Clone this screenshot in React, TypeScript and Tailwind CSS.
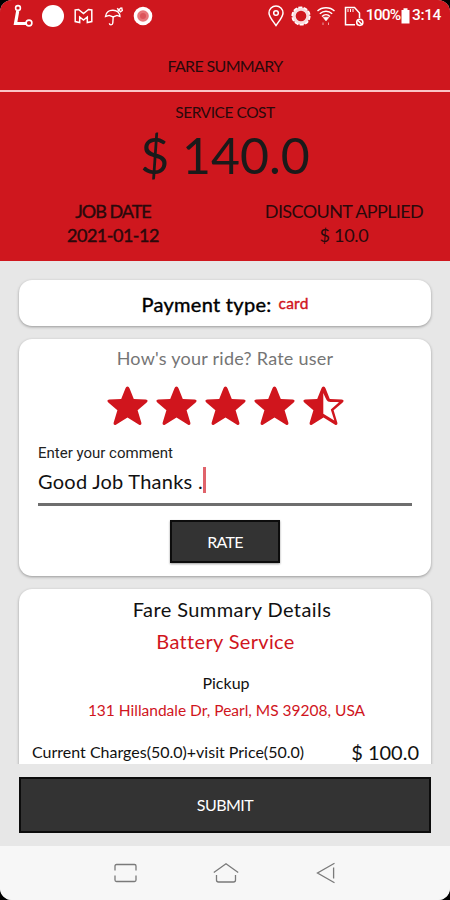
import { useState } from 'react';

const STAR_PATH =
  'M20.5 0.4 C21.4 0.4 22.1 1.3 22.6 2.5 L26.8 12.9 L38.6 13.4 C41 13.6 41.2 15.2 39.4 16.7 L30.6 24.3 L34.3 36.4 C34.8 38.6 33.6 39.6 31.7 38.4 L20.5 31.4 L9.3 38.4 C7.4 39.6 6.2 38.6 6.7 36.4 L10.4 24.3 L1.6 16.7 C-0.2 15.2 0 13.6 2.4 13.4 L14.2 12.9 L18.4 2.5 C18.9 1.3 19.6 0.4 20.5 0.4 Z';

interface StarProps {
  half?: boolean;
}

const Star = ({ half }: StarProps) => (
  <svg width="41" height="39" viewBox="0 0 41 39" fill="#d0151d">
    <path d={STAR_PATH} />
    {half && (
      <path
        d="M20.3 7 C21.8 10 23 14 25 15.6 C28 16.4 32 15.8 36 16.2 L27.8 23.5 L31.3 34.6 L20.3 27.8 Z"
        fill="#fff"
      />
    )}
  </svg>
);

const StatusBar = () => (
  <div className="flex h-[42px] items-start justify-between pl-[12px] pr-[9px] pt-[4px] text-white">
    <div className="flex h-6 items-center">
      <svg width="22" height="24" viewBox="0 0 22 24" fill="none" stroke="#fff">
        <path d="M5.7 7 L3.5 19.5 L15 19.5" strokeWidth="3.2" />
        <circle cx="6" cy="4" r="2.4" strokeWidth="1.6" />
        <circle cx="17" cy="19" r="2.9" strokeWidth="1.6" />
      </svg>
      <div className="ml-[8px] h-[22px] w-[22px] rounded-full bg-white" />
      <svg className="ml-[10px]" width="19" height="16" viewBox="0 0 19 16" fill="none" stroke="#fff" strokeWidth="1.5">
        <path d="M1.2 2 L4.5 1.5 L9.5 5.6 L14.5 1.5 L17.8 2 L17.8 13.6 L13.3 14.5 L13.3 9 L9.5 12 L5.7 9 L5.7 14.5 L1.2 13.6 Z" />
      </svg>
      <svg className="ml-[11px]" width="20" height="22" viewBox="0 0 20 22" fill="none" stroke="#fff" strokeWidth="1.4">
        <path d="M1.5 11.5 C2 7 5.5 5 9 5.2 C13 5.4 15.8 8 16 11.5 L13 10.4 L9.2 12 L5.2 10.4 Z" />
        <path d="M9.2 12 L8.8 18 C8.5 20.5 5.5 20.5 5.4 18.2 M13.5 6.5 L17 2.8 M13.2 3.2 L16.5 6.8 L18.3 5.5 L17.6 2.4" />
      </svg>
      <svg className="ml-[9px]" width="20" height="20" viewBox="0 0 20 20">
        <circle cx="10" cy="10" r="9.3" fill="#fff" />
        <circle cx="10" cy="10" r="5.8" fill="#e8777b" />
        <circle cx="10" cy="10" r="3" fill="#dc555b" />
      </svg>
    </div>

    <div className="flex h-6 items-center font-[Roboto]">
      <svg width="16" height="22" viewBox="0 0 16 22" fill="none" stroke="#fff" strokeWidth="1.5">
        <path d="M8 20.5 C5 16 1 12 1 8 A7 7 0 0 1 15 8 C15 12 11 16 8 20.5 Z" />
        <circle cx="8" cy="8" r="2.3" />
      </svg>
      <svg className="ml-[7px]" width="20" height="20" viewBox="0 0 20 20" fill="none" stroke="#fff">
        <circle cx="10" cy="10" r="7" strokeWidth="3.4" opacity="0.85" />
        <circle cx="10" cy="10" r="8.8" strokeWidth="1.6" strokeDasharray="4 1.5" />
      </svg>
      <svg className="ml-[5px]" width="20" height="20" viewBox="0 0 20 20" fill="none" stroke="#fff" strokeWidth="1.4">
        <path d="M1.5 5 C6 0.7 14 0.7 18.5 5 M3.8 7.8 C7.5 4.4 12.5 4.4 16.2 7.8 M6 10.4 C8.3 8.2 11.7 8.2 14 10.4" />
        <path d="M7 11.2 L13 11.2 L10 15 Z" fill="#fff" strokeWidth="0.5" />
        <path d="M7 16.5 L7 19 M12.5 16.5 L12.5 19" opacity="0.6" strokeWidth="1" />
      </svg>
      <svg className="ml-[8px]" width="20" height="21" viewBox="0 0 20 21" fill="none" stroke="#fff" strokeWidth="1.5">
        <path d="M11 18.7 L1.5 18.7 L1.5 1.5 L10.5 1.5 L15.5 7 L15.5 12" />
        <path d="M4 3 L4 6 M6.5 3 L6.5 6 M9 3 L9 6" strokeWidth="1" />
        <circle cx="15.8" cy="16.3" r="3.1" />
        <path d="M13.5 14 L18 18.6" />
      </svg>
      <span className="ml-[1px] w-[36px] text-[15.5px] font-medium tracking-[-0.8px]">100%</span>
      <svg width="9" height="16" viewBox="0 0 9 16" fill="#fff">
        <path d="M0.5 2 L2.5 2 L2.5 0.3 L6.5 0.3 L6.5 2 L8.5 2 L8.5 15.5 L0.5 15.5 Z" />
      </svg>
      <span className="ml-[2px] text-[15.5px] font-medium tracking-[-0.4px]">3:14</span>
    </div>
  </div>
);

const NavBar = () => (
  <div className="flex h-[54px] shrink-0 items-center bg-[#f7f7f7] pl-[114px]">
    <svg width="23" height="20" viewBox="0 0 23 20" fill="none" stroke="#7a7a7a" strokeWidth="1.3">
      <path d="M1 7.5 L1 3 Q1 1.5 2.5 1.5 L20.5 1.5 Q22 1.5 22 3 L22 7.5" />
      <path d="M1 12.5 L1 17 Q1 18.5 2.5 18.5 L20.5 18.5 Q22 18.5 22 17 L22 12.5" />
    </svg>
    <svg className="ml-[76px]" width="26" height="22" viewBox="0 0 26 22" fill="none" stroke="#7a7a7a" strokeWidth="1.3">
      <path d="M0.8 10.5 L13 1.8 L25.2 10.5" />
      <path d="M3.5 13 L3.5 18 Q3.5 20 5.5 20 L20.5 20 Q22.5 20 22.5 18 L22.5 13" />
    </svg>
    <svg className="ml-[77px]" width="20" height="22" viewBox="0 0 20 22" fill="none" stroke="#7a7a7a" strokeWidth="1.3">
      <path d="M18.5 1.3 L1.5 11 L18.5 20.7" />
      <path d="M17.6 5.5 L17.6 16.5" />
    </svg>
  </div>
);

const App = () => {
  const [comment] = useState('Good Job Thanks .');

  return (
    <div className="h-[900px] w-[450px] bg-black">
      <div className="flex h-full flex-col overflow-hidden rounded-[12px] bg-[#e7e7e7] font-[Lato,sans-serif] text-[#111]">
        <header className="h-[261px] shrink-0 bg-[#cf171e] text-center text-[#2a090b]">
          <StatusBar />
          <h1 className="h-[48px] text-[16px] leading-[48px] tracking-[-0.65px]">FARE SUMMARY</h1>
          <div className="h-[2px] bg-[#fbc4c6]" />
          <p className="mt-[10px] text-[15.5px] leading-[20px] tracking-[-0.45px]">SERVICE COST</p>
          <p className="mt-[3px] text-[50px] leading-[60px] text-[#1a1a1a]">$ 140.0</p>
          <div className="mt-[14px] flex leading-[24px]">
            <div className="w-[226px] text-[18px] [-webkit-text-stroke:0.4px_#2a090b]">
              <p className="tracking-[-1px]">JOB DATE</p>
              <p className="tracking-[-0.5px]">2021-01-12</p>
            </div>
            <div className="ml-[12px] w-[212px] text-[18px]">
              <p className="tracking-[-0.6px]">DISCOUNT APPLIED</p>
              <p className="tracking-[-0.3px]">$ 10.0</p>
            </div>
          </div>
        </header>

        <main className="h-[503px] shrink-0 overflow-hidden px-[19px] pt-[19px]">
          <section className="flex h-[46px] items-center justify-center rounded-[13px] bg-white pt-[2px] shadow-[0_1px_3px_rgba(0,0,0,0.35)]">
            <span className="text-[20px] tracking-[0.3px] text-black [-webkit-text-stroke:0.4px_#000]">Payment type:</span>
            <span className="ml-[7px] text-[15.5px] tracking-[0.2px] text-[#d0151d] [-webkit-text-stroke:0.4px_#d0151d]">card</span>
          </section>

          <section className="mt-[13px] flex h-[237px] flex-col rounded-[13px] bg-white px-[19px] pt-[7px] shadow-[0_1px_3px_rgba(0,0,0,0.35)]">
            <p className="text-center text-[18px] leading-[24px] tracking-[0.25px] text-[#757575]">How's your ride? Rate user</p>
            <div className="mt-[16px] flex justify-center gap-[8px]">
              <Star />
              <Star />
              <Star />
              <Star />
              <Star half />
            </div>
            <label className="mt-[18px] font-[Roboto] text-[15px] leading-[20px] text-[#222]">Enter your comment</label>
            <div className="mt-[5px] flex h-[27px] text-[20px] leading-[26px]">
              <span className="tracking-[0.25px]">{comment}</span>
              <span className="mt-[-1px] h-[26px] w-[3px] bg-[#e0636b]" />
            </div>
            <div className="mt-[8px] h-[3px] bg-[#6e6e6e]" />
            <button className="mx-auto mt-[14px] h-[43px] w-[110px] border-2 border-[#0c0c0c] bg-[#333] text-[16px] tracking-[-0.7px] text-white shadow-[0_1px_2px_rgba(0,0,0,0.4)]">
              RATE
            </button>
          </section>

          <section className="mt-[13px] h-[260px] rounded-[13px] bg-white pt-[7px] text-center shadow-[0_1px_3px_rgba(0,0,0,0.35)]">
            <h2 className="pl-[14px] text-[20px] leading-[26px] tracking-[0.42px]">Fare Summary Details</h2>
            <p className="mt-[6px] pl-[1px] text-[20px] leading-[26px] tracking-[0.33px] text-[#d0151d]">Battery Service</p>
            <p className="mt-[19px] pl-[2px] text-[16px] leading-[20px]">Pickup</p>
            <p className="mt-[7px] pl-[3px] text-[15.5px] leading-[20px] text-[#d0151d]">131 Hillandale Dr, Pearl, MS 39208, USA</p>
            <div className="mt-[20px] flex justify-between pl-[13px] pr-[12px] leading-[24px]">
              <span className="text-[16px]">Current Charges(50.0)+visit Price(50.0)</span>
              <span className="text-[20px]">$ 100.0</span>
            </div>
          </section>
        </main>

        <div className="h-[82px] shrink-0 px-[19px] pt-[13px]">
          <button className="h-[56px] w-full border-2 border-[#0c0c0c] bg-[#333] text-[16px] tracking-[-0.5px] text-white">SUBMIT</button>
        </div>
        <NavBar />
      </div>
    </div>
  );
};

export default App;
